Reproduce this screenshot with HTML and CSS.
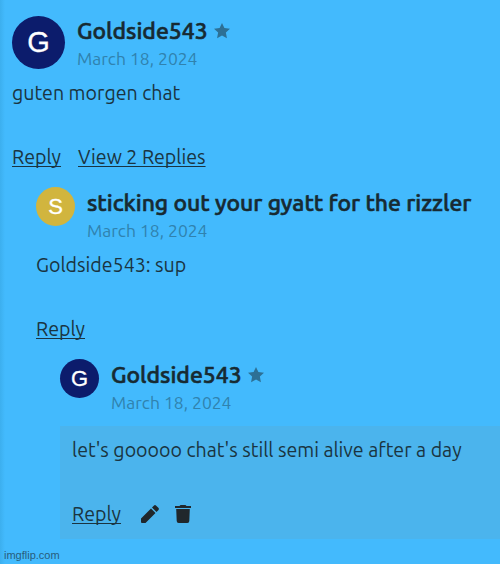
FILE: index.html
```html
<!DOCTYPE html>
<html lang="en">
<head>
<meta charset="utf-8">
<title>Comments</title>
<link rel="stylesheet" href="styles.css">
</head>
<body>
<main class="thread">
  <article class="comment">
    <header class="head">
      <div class="avatar large navy">G</div>
      <div class="meta">
        <div class="name"><span class="user">Goldside543</span><svg class="star" viewBox="0 0 24 24"><path d="M12 0l3.600 7.500 8.400 1-6.200 5.800 1.600 8.700L12 18.900l-7.400 4.100 1.600-8.700L0 8.500l8.400-1z"/></svg></div>
        <div class="date">March 18, 2024</div>
      </div>
    </header>
    <p class="text">guten morgen chat</p>
    <div class="actions"><a class="link">Reply</a><a class="link view">View 2 Replies</a></div>
  </article>
  <article class="comment level2">
    <header class="head">
      <div class="avatar gold">S</div>
      <div class="meta">
        <div class="name"><span>sticking out your gyatt for the rizzler</span></div>
        <div class="date">March 18, 2024</div>
      </div>
    </header>
    <p class="text">Goldside543: sup</p>
    <div class="actions"><a class="link">Reply</a></div>
  </article>
  <article class="comment level3">
    <header class="head">
      <div class="avatar navy">G</div>
      <div class="meta">
        <div class="name"><span class="user">Goldside543</span><svg class="star" viewBox="0 0 24 24"><path d="M12 0l3.600 7.500 8.400 1-6.200 5.800 1.600 8.700L12 18.900l-7.400 4.100 1.600-8.700L0 8.500l8.400-1z"/></svg></div>
        <div class="date">March 18, 2024</div>
      </div>
    </header>
    <div class="own">
      <p class="text">let's gooooo chat's still semi alive after a day</p>
      <div class="actions"><a class="link">Reply</a>
        <svg class="icon pencil" viewBox="0 0 18 18"><path d="M0 18v-4.500L10 3.500l4.500 4.500L4.500 18H1Q0 18 0 17zM11 2.500L12.800.7q1.200-1.200 2.400 0l2.100 2.100q1.200 1.200 0 2.400L15.500 7z"/></svg>
        <svg class="icon trash" viewBox="0 0 16 18"><path d="M0 1h4.500l1-1h5l1 1H16v2H0zM1.200 4h13.600L14.300 16q0 2-2 2H3.700q-2 0-2-2z"/></svg>
      </div>
    </div>
  </article>
</main>
<footer class="mark">imgflip.com</footer>
</body>
</html>
```
FILE: styles.css
```css
* { box-sizing: border-box; }
body {
  margin: 0;
  height: 564px;
  overflow: hidden;
  display: flex;
  flex-direction: column;
  background: linear-gradient(90deg, #3cafee 0, #43bafd 5px);
  color: #1a3441;
  font-family: Ubuntu, "Noto Sans", sans-serif;
}
.thread { padding: 15px 0 0 12px; }
.comment { margin-bottom: 15px; }
.level2 { margin-left: 24px; }
.level3 { margin-left: 48px; margin-bottom: 0; }
.head { display: flex; gap: 12px; height: 64px; }
.level3 .head { height: 67px; }
.avatar {
  width: 39px;
  height: 39px;
  border-radius: 50%;
  display: flex;
  align-items: center;
  justify-content: center;
  color: #fff;
  font: 22px/1 "Liberation Sans", sans-serif;
  -webkit-text-stroke: 0.3px #fff;
}
.large { width: 53px; height: 53px; font-size: 29px; margin-top: 1px; }
.navy { background: #0c1c6c; }
.gold { background: #d1b53e; }
.meta { padding-top: 1px; white-space: nowrap; }
.name {
  height: 29px;
  line-height: 28px;
  display: flex;
  align-items: center;
  gap: 5px;
  font-size: 22.950px;
  font-weight: 500;
  color: #172a32;
  -webkit-text-stroke: 0.6px #172a32;
}
.user { width: 132px; }
.star { width: 16px; height: 16px; fill: #2d7095; }
.date { font-size: 17.500px; line-height: 28px; color: #3082ae; }
.text { margin: 0; font-size: 19.600px; line-height: 28px; height: 64px; white-space: nowrap; }
.actions { display: flex; align-items: center; height: 29px; font-size: 19.600px; line-height: 28px; }
.link {
  width: 49px;
  height: 29px;
  white-space: nowrap;
  text-decoration: underline;
  text-decoration-thickness: 1px;
  text-underline-offset: 2px;
  text-decoration-skip-ink: none;
}
.view { width: 127px; margin-left: 17px; }
.own { height: 113px; padding: 10px 12px; background: #4bb4ed; }
.icon { fill: #20272c; height: 18px; margin-bottom: 2px; }
.pencil { width: 18px; margin-left: 20px; }
.trash { width: 16px; margin-left: 16px; }
.mark { margin-top: auto; padding-left: 4px; font: 11px/18px "Liberation Sans", sans-serif; color: #285d7b; }
```
